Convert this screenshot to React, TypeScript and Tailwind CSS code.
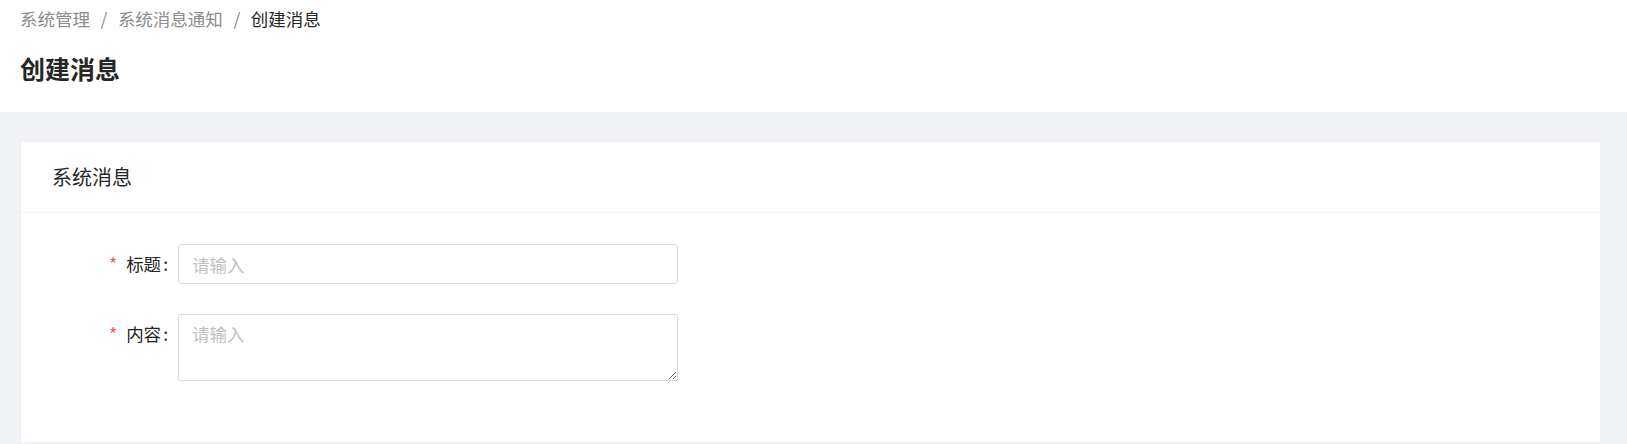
import { useState } from "react";

export default function App() {
  const [title, setTitle] = useState<string>("");
  const [content, setContent] = useState<string>("");

  return (
    <div className="min-h-screen bg-[#f0f2f5] font-['Microsoft_YaHei','Noto_Sans_CJK_SC',sans-serif] text-[17.5px] leading-[27.5px] text-[#262626]">
      <div className="bg-white px-[20px] pt-[5px] pb-[24.5px]">
        <nav className="flex items-center text-[#8c8c8c]">
          <span>系统管理</span>
          <span className="mx-[10.5px]">/</span>
          <span>系统消息通知</span>
          <span className="mx-[10.5px]">/</span>
          <span className="text-[#262626]">创建消息</span>
        </nav>
        <h1 className="mt-[15px] text-[25px] leading-[40px] font-bold text-[#262626]">
          创建消息
        </h1>
      </div>

      <div className="ml-[21px] mr-[27px] mt-[30px] rounded-[2.5px] bg-white">
        <div className="flex h-[71px] items-center border-b border-[#f0f0f0] pl-[31px] text-[20px] leading-[30px]">
          系统消息
        </div>
        <form
          className="flex flex-col gap-[30px] px-[30px] pt-[31px] pb-[61px]"
          onSubmit={(e) => e.preventDefault()}
        >
          <div className="flex items-center">
            <label className="flex w-[127px] shrink-0 items-center justify-end">
              <span className="mr-[9px] text-[#ff4d4f]">*</span>
              标题
              <span className="ml-[2px] mr-[10px]">:</span>
            </label>
            <input
              type="text"
              value={title}
              placeholder="请输入"
              onChange={(e) => setTitle(e.target.value)}
              className="h-[40px] w-[500px] rounded-[2.5px] border border-[#d9d9d9] bg-white px-[13px] outline-none placeholder:text-[#bfbfbf]"
            />
          </div>
          <div className="flex items-start">
            <label className="flex h-[40px] w-[127px] shrink-0 items-center justify-end">
              <span className="mr-[9px] text-[#ff4d4f]">*</span>
              内容
              <span className="ml-[2px] mr-[10px]">:</span>
            </label>
            <textarea
              value={content}
              placeholder="请输入"
              onChange={(e) => setContent(e.target.value)}
              className="h-[67px] w-[500px] rounded-[2.5px] border border-[#d9d9d9] bg-white px-[13px] py-[5px] outline-none placeholder:text-[#bfbfbf]"
            />
          </div>
        </form>
      </div>
    </div>
  );
}
